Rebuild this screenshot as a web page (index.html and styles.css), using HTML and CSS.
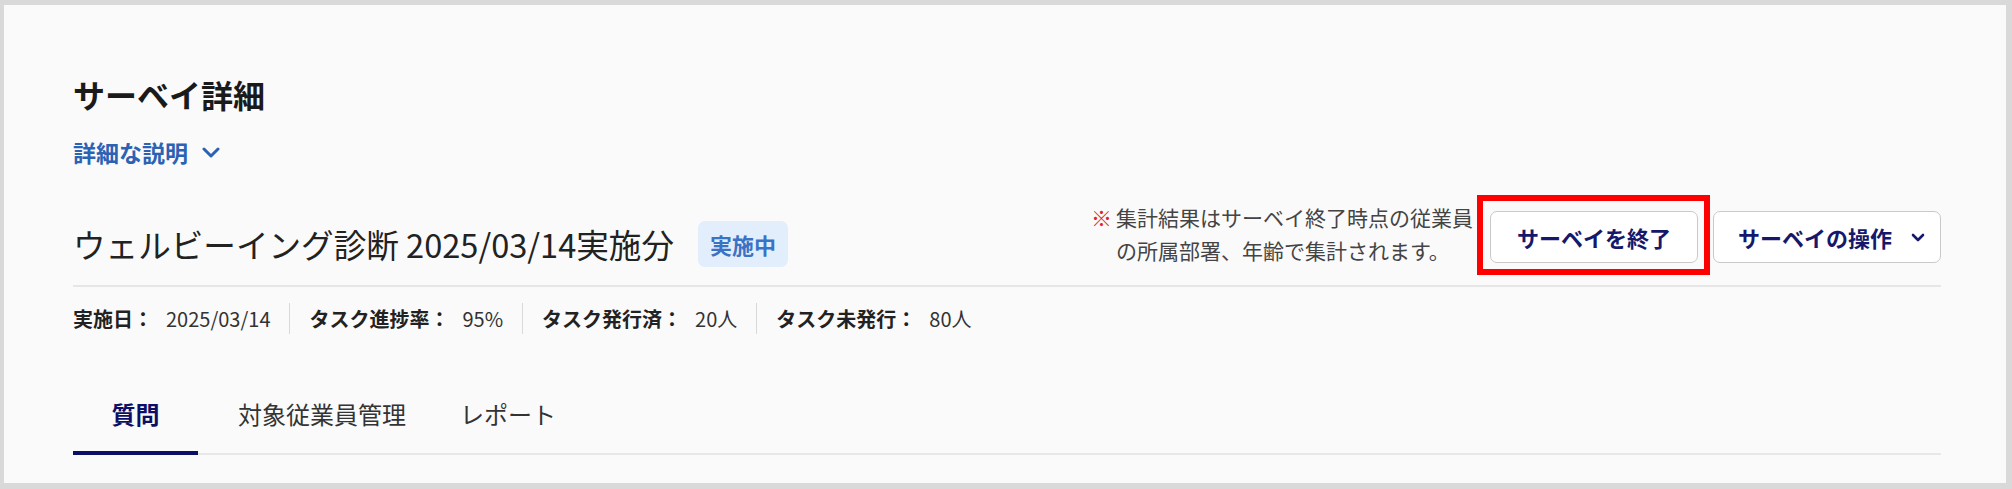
FILE: index.html
```html
<!DOCTYPE html>
<html lang="ja">
<head>
<meta charset="utf-8">
<title>サーベイ詳細</title>
<link rel="stylesheet" href="styles.css">
</head>
<body>
<div class="card">
  <h1 class="page-title">サーベイ詳細</h1>
  <div class="desc-toggle">詳細な説明<svg class="chev-lg" width="18" height="11" viewBox="0 0 18 11"><path d="M2 2l7 7 7-7" fill="none" stroke="currentColor" stroke-width="3" stroke-linecap="round" stroke-linejoin="round"/></svg></div>

  <div class="title-row">
    <div class="title-left">
      <span class="survey-name">ウェルビーイング診断 2025/03/14実施分</span>
      <span class="badge">実施中</span>
    </div>
    <div class="title-right">
      <div class="note"><span class="mark">※</span><span class="note-text">集計結果はサーベイ終了時点の従業員<br>の所属部署、年齢で集計されます。</span></div>
      <div class="actions">
        <div class="highlight"><button class="btn">サーベイを終了</button></div>
        <button class="btn btn-menu">サーベイの操作<svg class="chev-sm" width="16" height="10" viewBox="0 0 16 10"><path d="M3 3l5 5 5-5" fill="none" stroke="currentColor" stroke-width="2.6" stroke-linecap="round" stroke-linejoin="round"/></svg></button>
      </div>
    </div>
  </div>

  <div class="meta-row">
    <div class="meta-item"><span class="meta-label">実施日：</span><span class="meta-value">2025/03/14</span></div>
    <div class="meta-item"><span class="meta-label">タスク進捗率：</span><span class="meta-value">95%</span></div>
    <div class="meta-item"><span class="meta-label">タスク発行済：</span><span class="meta-value">20人</span></div>
    <div class="meta-item"><span class="meta-label">タスク未発行：</span><span class="meta-value">80人</span></div>
  </div>

  <div class="tabs">
    <div class="tab tab-active">質問</div>
    <div class="tab">対象従業員管理</div>
    <div class="tab">レポート</div>
  </div>
</div>
</body>
</html>
```
FILE: styles.css
```css
html, body {
  margin: 0;
  padding: 0;
}
body {
  background: #d9d9d9;
  font-family: "Noto Sans CJK JP", "Noto Sans", sans-serif;
  color: #222;
}
.card {
  box-sizing: border-box;
  margin: 5px 6px 6px 4px;
  height: 478px;
  background: #fafafa;
  padding: 65px 65px 0 69px;
}
.page-title {
  margin: 0;
  font-size: 32px;
  line-height: 48px;
  font-weight: 700;
  color: #1a1a1a;
}
.desc-toggle {
  margin-top: 17px;
  display: flex;
  align-items: center;
  font-size: 23px;
  line-height: 34px;
  font-weight: 700;
  color: #2c62b4;
}
.chev-lg {
  margin-left: 14px;
}
.title-row {
  margin-top: 32px;
  display: flex;
  justify-content: space-between;
  align-items: flex-start;
  padding-bottom: 18px;
  border-bottom: 2px solid #e6e6e6;
}
.title-left {
  margin-top: 20px;
  display: flex;
  align-items: center;
  gap: 24px;
}
.survey-name {
  font-size: 32.6px;
  line-height: 46px;
  color: #222;
}
.badge {
  height: 46px;
  line-height: 46px;
  padding: 0 12px;
  background: #e3eefc;
  border-radius: 7px;
  font-size: 22px;
  font-weight: 700;
  color: #3a72c4;
}
.title-right {
  display: flex;
  align-items: flex-start;
}
.note {
  display: flex;
  font-size: 21px;
  line-height: 33px;
  color: #444;
  margin-right: 17px;
}
.mark {
  color: #e0262d;
  margin-right: 4px;
}
.actions {
  margin-top: 10px;
  display: flex;
  gap: 15px;
}
.highlight {
  position: relative;
}
.highlight::after {
  content: "";
  position: absolute;
  top: -16px;
  bottom: -12px;
  left: -13px;
  right: -12px;
  border: 6px solid #ff0000;
  pointer-events: none;
}
.btn {
  box-sizing: border-box;
  height: 52px;
  display: flex;
  align-items: center;
  padding: 0 26px;
  background: #fff;
  border: 1.5px solid #c9c9c9;
  border-radius: 7px;
  font-family: inherit;
  font-size: 22px;
  font-weight: 700;
  color: #15186b;
}
.btn-menu {
  padding: 0 14px 0 24px;
}
.chev-sm {
  margin-left: 18px;
}
.meta-row {
  display: flex;
  padding-top: 16px;
}
.meta-item {
  padding: 0 19px;
  border-left: 1px solid #d9d9d9;
  font-size: 20px;
  line-height: 31px;
}
.meta-item:first-child {
  padding-left: 0;
  border-left: none;
}
.meta-label {
  font-weight: 700;
  color: #222;
}
.meta-value {
  margin-left: 13px;
  color: #333;
}
.tabs {
  margin-top: 63px;
  display: flex;
  border-bottom: 2px solid #e8e8e8;
}
.tab {
  padding: 0 27px 20px;
  margin-bottom: -2px;
  font-size: 24px;
  line-height: 34px;
  color: #333;
  border-bottom: 4px solid transparent;
}
.tab-active {
  min-width: 125px;
  box-sizing: border-box;
  margin-right: 13px;
  text-align: center;
  font-weight: 700;
  color: #0d0f66;
  border-bottom-color: #0d0f66;
}
```
